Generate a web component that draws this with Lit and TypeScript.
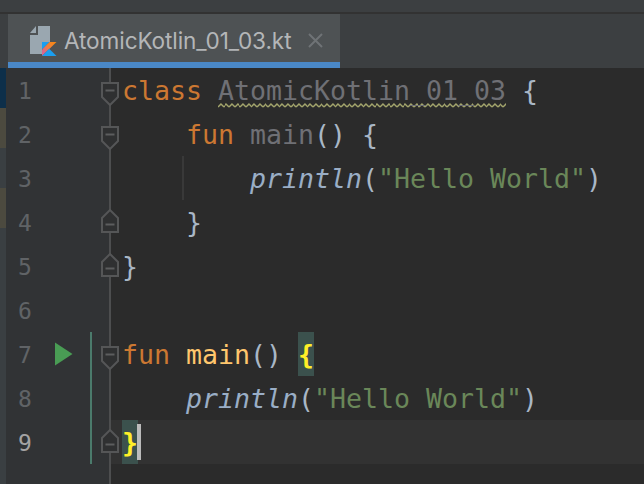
import { LitElement, html, css, svg } from "lit";
import { customElement } from "lit/decorators.js";

const foldStart = svg`<svg class="fold" viewBox="0 0 18 24" width="18" height="24"><path d="M1 1H17V15L9 23L1 15Z" fill="#2f3031" stroke="#555657" stroke-width="2"/><path d="M4.5 8.5H13.5" stroke="#5c5d5e" stroke-width="2"/></svg>`;
const foldEnd = svg`<svg class="fold end" viewBox="0 0 18 24" width="18" height="24"><path d="M1 23H17V9L9 1L1 9Z" fill="#2f3031" stroke="#555657" stroke-width="2"/><path d="M4.5 15.5H13.5" stroke="#5c5d5e" stroke-width="2"/></svg>`;

@customElement("app-root")
export class AppRoot extends LitElement {
  static styles = css`
    :host { display: block; width: 644px; height: 484px; overflow: hidden; background: #2b2b2b; font-family: "DejaVu Sans Mono", monospace; }
    .top { height: 12px; background: #3c3f41; border-bottom: 2px solid #323232; }
    .tabs { height: 54px; background: #3c3f41; padding-left: 8px; display: flex; }
    .tab { width: 332px; height: 54px; box-sizing: border-box; background: #4e5254; border-bottom: 6px solid #4a88c7; display: flex; align-items: center; padding: 6px 0 0 22px; }
    .file { flex: none; }
    .name { font-family: Inter, "Liberation Sans", sans-serif; font-size: 22.6px; color: #b4b6b8; margin: -2px 0 0 7px; white-space: nowrap; letter-spacing: -0.1px; }
    .close { margin: -2px 17px 0 auto; flex: none; }
    .main { display: flex; height: 416px; }
    .strip { width: 6px; flex: none; display: flex; flex-direction: column; background: #3a3f42; }
    .strip div { height: 40px; }
    .s1 { background: #0d2f4a; }
    .s2 { background: #4c4a3f; }
    .s3 { background: #3a3f42; }
    .editor { flex: 1; display: flex; flex-direction: column; min-width: 0; }
    .row { height: 44px; flex: none; display: flex; }
    .row.filler { flex: 1; height: auto; }
    .gutter { width: 105px; flex: none; box-sizing: border-box; background: #313335; border-right: 2px solid #4d4e4f; display: flex; position: relative; }
    .num { width: 49px; box-sizing: border-box; padding-left: 12px; font-size: 23px; line-height: 46px; color: #606366; flex: none; }
    .num.cur { color: #a4a3a3; }
    .run { width: 35px; flex: none; display: flex; align-items: center; }
    .bar { width: 2px; flex: none; }
    .bar.on { background: #4b7b6c; }
    .fold { position: absolute; left: 95px; top: 14px; z-index: 1; }
    .fold.end { top: 9px; }
    .code { flex: 1; padding-left: 11px; font-size: 26.58px; line-height: 46px; color: #a9b7c6; white-space: pre; position: relative; }
    .code.cur { background: #323232; }
    .kw { color: #cc7832; }
    .dim { color: #6f7075; }
    .wavy {
      padding-bottom: 2px;
      background-image: url("data:image/svg+xml,%3Csvg xmlns='http://www.w3.org/2000/svg' width='5.6' height='5'%3E%3Cpath d='M0 4L2.8 1L5.6 4' fill='none' stroke='%23a3a56c' stroke-width='1.3'/%3E%3C/svg%3E");
      background-repeat: repeat-x;
      background-position: left bottom;
      background-size: 5.6px 5px;
    }
    .fn { color: #ffc66d; }
    .it { font-style: italic; color: #9aaec6; }
    .str { color: #6a8759; }
    .match { background: #3b514d; color: #ffef28; font-weight: 700; display: inline-block; height: 44px; }
    .guide { display: inline-block; width: 2px; height: 44px; background: #393939; vertical-align: top; margin-left: 60px; margin-right: 66px; }
    .caret { display: inline-block; width: 4px; height: 36px; background: #bbbbbb; position: absolute; left: 26px; top: 4px; }
  `;

  private row(n: number, content: unknown, opts: { run?: boolean; bar?: boolean; fold?: unknown; cur?: boolean } = {}) {
    return html`<div class="row">
      <div class="gutter">
        <div class="num ${opts.cur ? "cur" : ""}">${n}</div>
        <div class="run">${opts.run
          ? svg`<svg width="18" height="24" viewBox="0 0 18 24"><path d="M0 0.5L17.5 12L0 23.5Z" fill="#499c54"/></svg>`
          : ""}</div>
        <div class="bar ${opts.bar ? "on" : ""}"></div>
        ${opts.fold ?? ""}
      </div>
      <div class="code ${opts.cur ? "cur" : ""}">${content}</div>
    </div>`;
  }

  render() {
    return html`
      <div class="top"></div>
      <div class="tabs">
        <div class="tab">
          <svg class="file" width="27" height="30" viewBox="0 0 27 30">
            <defs>
              <linearGradient id="kp" x1="1" y1="0" x2="0" y2="1">
                <stop offset="0" stop-color="#f88909"/><stop offset="0.45" stop-color="#f0803a"/><stop offset="0.8" stop-color="#d9668f"/>
              </linearGradient>
            </defs>
            <path d="M0 7L6 0V7Z" fill="#9aa7b0"/>
            <path d="M0 9H8V0H20V28H0Z" fill="#9aa7b0"/>
            <path d="M12 30V16H27V30Z" fill="#4e5254"/>
            <path d="M12 16H19.5L12 23.5Z" fill="#1b9ff0"/>
            <path d="M19.5 16H26.5L12 30V23.5Z" fill="url(#kp)"/>
            <path d="M12 30L19.2 22.8L26.5 30Z" fill="#1b9ff0"/>
          </svg>
          <span class="name">AtomicKotlin_01_03.kt</span>
          <svg class="close" width="15" height="15" viewBox="0 0 15 15"><path d="M1 1L14 14M14 1L1 14" stroke="#6f7376" stroke-width="2" fill="none"/></svg>
        </div>
      </div>
      <div class="main">
        <div class="strip">
          <div class="s1"></div><div class="s2"></div><div class="s3"></div><div class="s2"></div>
        </div>
        <div class="editor">
          ${this.row(1, html`<span class="kw">class</span> <span class="dim wavy">AtomicKotlin_01_03</span> {`, { fold: foldStart })}
          ${this.row(2, html`    <span class="kw">fun</span> <span class="dim">main</span>() {`, { fold: foldStart })}
          ${this.row(3, html`<span class="guide"></span><span class="it">println</span>(<span class="str">"Hello World"</span>)`)}
          ${this.row(4, html`    }`, { fold: foldEnd })}
          ${this.row(5, html`}`, { fold: foldEnd })}
          ${this.row(6, "")}
          ${this.row(7, html`<span class="kw">fun</span> <span class="fn">main</span>() <span class="match">{</span>`, { run: true, bar: true, fold: foldStart })}
          ${this.row(8, html`    <span class="it">println</span>(<span class="str">"Hello World"</span>)`, { bar: true })}
          ${this.row(9, html`<span class="match">}</span><span class="caret"></span>`, { bar: true, fold: foldEnd, cur: true })}
          <div class="row filler"><div class="gutter"></div><div class="code"></div></div>
        </div>
      </div>
    `;
  }
}
